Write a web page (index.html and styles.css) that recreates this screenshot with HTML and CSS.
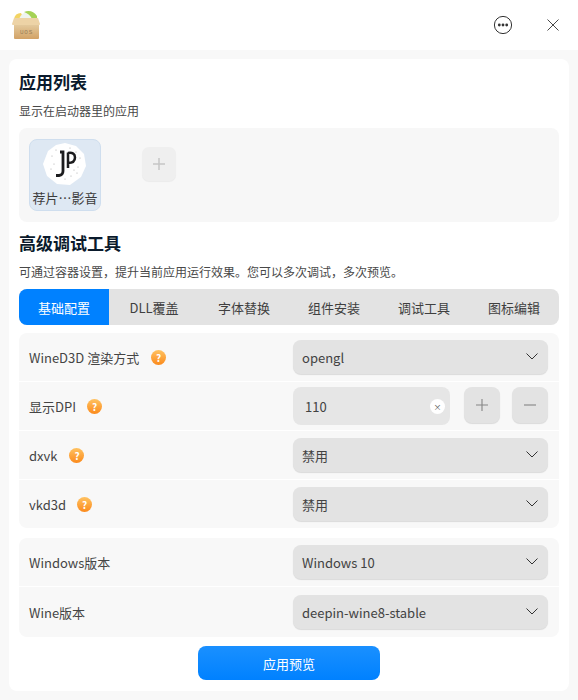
FILE: index.html
```html
<!DOCTYPE html>
<html lang="zh">
<head>
<meta charset="utf-8">
<title>应用列表</title>
<link rel="stylesheet" href="styles.css">
</head>
<body>
<div class="window">
  <header class="titlebar">
    <svg class="app-logo" width="30" height="30" viewBox="0 0 30 30">
      <defs>
        <linearGradient id="boxg" x1="0" y1="0" x2="0" y2="1"><stop offset="0" stop-color="#e3c99c"/><stop offset="1" stop-color="#d2a266"/></linearGradient>
      </defs>
      <path d="M3 9 Q4 3 10 3 L13 9 Z" fill="#f3d463"/>
      <path d="M8 9 Q11 1 19 2 L21 9 Z" fill="#eff4ef"/>
      <path d="M13 2 Q21 -1 26 6 L26 9 L21 9 Q19 4 13 2 Z" fill="#a5d255"/>
      <path d="M3 8 H27 L29 14 Q29 15 28 15 H2 Q1 15 1 14 Z" fill="#edd3a6"/>
      <path d="M3 15 H28 V28 Q28 29 27 29 H4 Q3 29 3 28 Z" fill="url(#boxg)"/>
      <text x="15.5" y="23.5" class="logo-text" text-anchor="middle">UOS</text>
    </svg>
    <div class="title-actions">
      <svg class="title-icon" width="20" height="20" viewBox="0 0 20 20">
        <circle cx="10" cy="10" r="8.6" fill="none" stroke="#333" stroke-width="1"/>
        <circle cx="6.3" cy="10" r="1.4" fill="#333"/><circle cx="10" cy="10" r="1.4" fill="#333"/><circle cx="13.7" cy="10" r="1.4" fill="#333"/>
      </svg>
      <svg class="title-icon" width="14" height="14" viewBox="0 0 14 14">
        <path d="M1.5 1.5 L12.5 12.5 M12.5 1.5 L1.5 12.5" stroke="#333" stroke-width="0.9" fill="none"/>
      </svg>
    </div>
  </header>

  <main class="content">
    <div class="card">
      <h2 class="heading">应用列表</h2>
      <p class="desc">显示在启动器里的应用</p>
      <section class="app-panel">
        <div class="app-tile">
          <svg width="44" height="44" viewBox="0 0 44 44">
            <path d="M22 0 L33 3 L41 11 L43 23 L38 34 L27 42 L14 41 L4 33 L0 21 L5 8 L13 2 Z" fill="#fff"/>
            <path d="M17 9 H20 V28 Q20 32 16 32.5 H13" stroke="#1c1c1e" stroke-width="2.8" fill="none"/>
            <path d="M25 9.5 V25 M25 10 Q32 9 32 14.5 Q32 20 25 20" stroke="#1c1c1e" stroke-width="2.5" fill="none"/>
            <g fill="#a8a8a8">
              <circle cx="9" cy="13" r=".6"/><circle cx="13" cy="7" r=".6"/><circle cx="27" cy="5" r=".6"/><circle cx="33" cy="9" r=".6"/>
              <circle cx="37" cy="15" r=".6"/><circle cx="35" cy="24" r=".6"/><circle cx="31" cy="27" r=".6"/><circle cx="28" cy="33" r=".6"/>
              <circle cx="34" cy="30" r=".6"/><circle cx="8" cy="26" r=".6"/><circle cx="11" cy="21" r=".6"/><circle cx="22" cy="36" r=".6"/>
            </g>
          </svg>
          <span class="app-name">荐片…影音</span>
        </div>
        <button class="add-btn">
          <svg width="12" height="12" viewBox="0 0 12 12"><path d="M6 0 V12 M0 6 H12" stroke="#c6c6c6" stroke-width="1.5"/></svg>
        </button>
      </section>

      <h2 class="heading heading-second">高级调试工具</h2>
      <p class="desc">可通过容器设置，提升当前应用运行效果。您可以多次调试，多次预览。</p>

      <nav class="tabs">
        <span class="tab tab-active">基础配置</span>
        <span class="tab">DLL覆盖</span>
        <span class="tab">字体替换</span>
        <span class="tab">组件安装</span>
        <span class="tab">调试工具</span>
        <span class="tab">图标编辑</span>
      </nav>

      <section class="group">
        <div class="row">
          <div class="label">WineD3D 渲染方式<span class="help help-a">?</span></div>
          <div class="select"><span>opengl</span><svg class="chev" width="12" height="7" viewBox="0 0 12 7"><path d="M.5 .5 L6 6 L11.5 .5" stroke="#333" stroke-width="1" fill="none"/></svg></div>
        </div>
        <div class="row">
          <div class="label">显示DPI<span class="help help-b">?</span></div>
          <div class="dpi">
            <div class="dpi-input"><span>110</span><span class="clear">×</span></div>
            <button class="step"><svg width="12" height="12" viewBox="0 0 12 12"><path d="M6 0 V12 M0 6 H12" stroke="#858585" stroke-width="1.1"/></svg></button>
            <button class="step"><svg width="12" height="12" viewBox="0 0 12 12"><path d="M0 6 H12" stroke="#858585" stroke-width="1.1"/></svg></button>
          </div>
        </div>
        <div class="row">
          <div class="label">dxvk<span class="help help-c">?</span></div>
          <div class="select"><span>禁用</span><svg class="chev" width="12" height="7" viewBox="0 0 12 7"><path d="M.5 .5 L6 6 L11.5 .5" stroke="#333" stroke-width="1" fill="none"/></svg></div>
        </div>
        <div class="row">
          <div class="label">vkd3d<span class="help help-b">?</span></div>
          <div class="select"><span>禁用</span><svg class="chev" width="12" height="7" viewBox="0 0 12 7"><path d="M.5 .5 L6 6 L11.5 .5" stroke="#333" stroke-width="1" fill="none"/></svg></div>
        </div>
      </section>

      <section class="group group-second">
        <div class="row">
          <div class="label">Windows版本</div>
          <div class="select"><span>Windows 10</span><svg class="chev" width="12" height="7" viewBox="0 0 12 7"><path d="M.5 .5 L6 6 L11.5 .5" stroke="#333" stroke-width="1" fill="none"/></svg></div>
        </div>
        <div class="row">
          <div class="label">Wine版本</div>
          <div class="select"><span>deepin-wine8-stable</span><svg class="chev" width="12" height="7" viewBox="0 0 12 7"><path d="M.5 .5 L6 6 L11.5 .5" stroke="#333" stroke-width="1" fill="none"/></svg></div>
        </div>
      </section>

      <div class="footer"><button class="primary">应用预览</button></div>
    </div>
  </main>
</div>
</body>
</html>
```

FILE: styles.css
```css
* { box-sizing: border-box; }
html, body { margin: 0; padding: 0; }
body {
  width: 578px;
  height: 700px;
  overflow: hidden;
  background: #f8f8f8;
  font-family: "Noto Sans CJK SC", "Noto Sans", sans-serif;
  color: #414d68;
}
button { font-family: inherit; border: 0; padding: 0; }
.window { display: flex; flex-direction: column; height: 700px; }

.titlebar {
  height: 50px;
  flex: none;
  background: #fff;
  display: flex;
  align-items: center;
  justify-content: space-between;
  padding: 0 18px 0 11px;
}
.app-logo { display: block; }
.logo-text { font-size: 6px; letter-spacing: .7px; fill: #9c7f58; font-family: "Liberation Mono", monospace; }
.title-actions { display: flex; align-items: center; gap: 33px; }
.title-icon { display: block; }

.content { flex: 1; padding: 9px; }
.card {
  height: 632px;
  background: #fff;
  border-radius: 8px;
  padding: 9px 10px 0;
}

.heading {
  margin: 0;
  font-size: 17px;
  line-height: 28px;
  font-weight: 700;
  color: #0a1a2c;
}
.heading-second { margin-top: 7px; }
.desc {
  margin: 0;
  font-size: 12px;
  line-height: 20px;
  padding-top: 5px;
  color: #484848;
}

.app-panel {
  margin-top: 7px;
  height: 94px;
  background: #f7f7f7;
  border-radius: 8px;
  padding: 11px 10px;
  display: flex;
  align-items: flex-start;
  gap: 41px;
}
.app-tile {
  width: 72px;
  height: 72px;
  border-radius: 8px;
  background: #dee8f3;
  border: 1px solid #cfdeee;
  display: flex;
  flex-direction: column;
  align-items: center;
  padding-top: 3px;
}
.app-tile svg { display: block; }
.app-name { font-size: 13px; line-height: 20px; color: #3c3c3c; white-space: nowrap; margin-top: 1px; }
.add-btn {
  margin-top: 8px;
  width: 34px;
  height: 34px;
  border-radius: 7px;
  background: #efefef;
  box-shadow: 0 1px 1px rgba(0,0,0,.05);
  display: flex;
  align-items: center;
  justify-content: center;
}

.tabs {
  margin-top: 7px;
  height: 36px;
  display: flex;
  border-radius: 8px;
  background: #e3e3e3;
  overflow: hidden;
}
.tab {
  width: 90px;
  display: flex;
  align-items: center;
  justify-content: center;
  font-size: 13px;
  color: #3f3f3f;
}
.tab-active { background: #0081ff; color: #fff; }

.group {
  margin-top: 8px;
  background: #f8f8f8;
  border-radius: 8px;
  display: flex;
  flex-direction: column;
}
.group-second { margin-top: 10px; }
.row {
  height: 49px;
  display: flex;
  align-items: center;
  justify-content: space-between;
  padding: 0 11px 0 10px;
  border-bottom: 1px solid #fff;
}
.row:last-child { border-bottom: 0; height: 48px; }
.group-second .row:last-child { height: 50px; }
.label {
  display: flex;
  align-items: center;
  font-size: 13px;
  color: #454545;
}
.help {
  width: 15px;
  height: 15px;
  border-radius: 50%;
  background: linear-gradient(#ffc261, #fb8a1c);
  color: #fff;
  font-size: 10px;
  font-weight: 700;
  line-height: 15px;
  text-align: center;
}
.help-a { margin-left: 12px; }
.help-b { margin-left: 11px; }
.help-c { margin-left: 12px; }
.select {
  width: 255px;
  height: 34px;
  background: #e3e3e3;
  border-radius: 8px;
  box-shadow: 0 1px 1px rgba(0,0,0,.12);
  padding: 0 10px 0 9px;
  display: flex;
  align-items: center;
  justify-content: space-between;
  font-size: 13px;
  color: #424242;
}
.chev { margin-bottom: 1px; }
.dpi { width: 255px; display: flex; align-items: flex-start; }
.dpi-input {
  width: 157px;
  height: 38px;
  background: #e6e6e6;
  border-radius: 8px;
  padding: 0 5px 0 12px;
  display: flex;
  align-items: center;
  justify-content: space-between;
  font-size: 13px;
  color: #424242;
}
.clear {
  width: 15px;
  height: 15px;
  border-radius: 50%;
  background: #fff;
  font-size: 8px;
  line-height: 15px;
  text-align: center;
  color: #555;
}
.step {
  width: 36px;
  height: 36px;
  margin-left: 14px;
  border-radius: 8px;
  background: #e3e3e3;
  box-shadow: 0 1px 1px rgba(0,0,0,.12);
  display: flex;
  align-items: center;
  justify-content: center;
}
.step + .step { margin-left: 12px; }

.footer { margin-top: 9px; display: flex; justify-content: center; }
.primary {
  width: 182px;
  height: 34px;
  border-radius: 8px;
  background: linear-gradient(#1a90ff, #0081ff);
  color: #fff;
  font-size: 13px;
}
```
